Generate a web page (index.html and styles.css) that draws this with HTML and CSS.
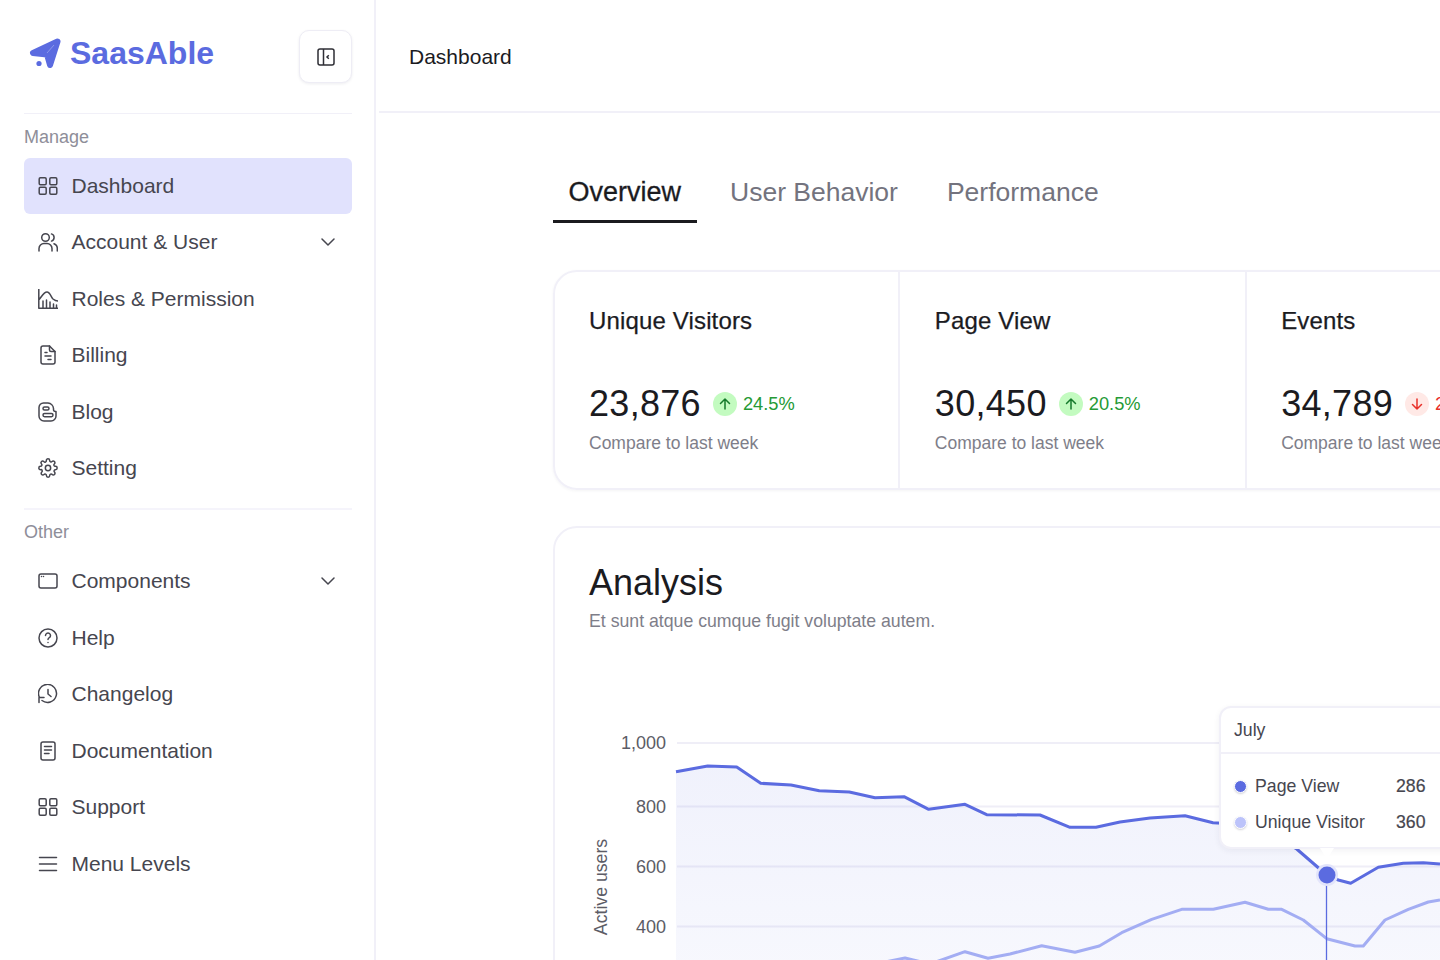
FILE: index.html
```html
<!DOCTYPE html>
<html lang="en">
<head>
    <meta charset="UTF-8" />
    <meta name="viewport" content="width=device-width, initial-scale=1.0">
    <title>SaasAble Dashboard</title>
    <link rel="stylesheet" href="styles.css">
</head>
<body>
<div class="app">
    <aside class="sidebar">
        <div class="brand-row">
            <div class="brand">
                <svg class="brand-mark" viewBox="0 0 36 36"><path class="brand-plane" d="M29.500 5.500 5 17 19 18.500 22 29z"/><path d="M26 9 19 17" stroke="#fff" stroke-opacity="0.3" fill="none"/><circle cx="11" cy="27.500" r="2.600" fill="#5b6be0"/></svg>
                <span class="brand-name">SaasAble</span>
            </div>
            <button class="collapse-btn">
                <svg viewBox="0 0 20 20" class="icon-sm"><rect x="2" y="2" width="16" height="16" rx="2"/><path d="M7.500 2v16M12.800 8.200 11 10l1.800 1.800"/></svg>
            </button>
        </div>

        <div class="nav-group first">
            <div class="nav-label">Manage</div>
            <a class="nav-item active">
                <svg viewBox="0 0 20 20" class="icon"><rect x="1.200" y="1.700" width="7" height="7" rx="1.200"/><rect x="11.800" y="1.700" width="7" height="7" rx="1.200"/><rect x="1.200" y="11.300" width="7" height="7" rx="1.200"/><rect x="11.800" y="11.300" width="7" height="7" rx="1.200"/></svg>
                <span>Dashboard</span>
            </a>
            <a class="nav-item">
                <svg viewBox="0 0 20 20" class="icon"><circle cx="7.500" cy="5.500" r="3.800"/><path d="M1 19v-2.500a5 5 0 0 1 5-5h3a5 5 0 0 1 5 5V19M13.500 1.900a3.800 3.800 0 0 1 0 7.200M16 11.800a5 5 0 0 1 3.300 4.700V19"/></svg>
                <span>Account &amp; User</span>
                <svg viewBox="0 0 14 14" class="chevron"><path d="M1 4l6 6 6-6"/></svg>
            </a>
            <a class="nav-item">
                <svg viewBox="0 0 20 20" class="icon"><path d="M.8 0v19.200H20M.8 11C3.500 8 5.500 3 9 3c3 0 4 5 6 7 1.200 1 3 2 5 2"/><path d="M5 19v-7M8.500 19v-8M12 19v-6M15.500 19v-4M18.500 19v-3"/></svg>
                <span>Roles &amp; Permission</span>
            </a>
            <a class="nav-item">
                <svg viewBox="0 0 20 20" class="icon"><path d="M11.500 1H5a2 2 0 0 0-2 2v14a2 2 0 0 0 2 2h10a2 2 0 0 0 2-2V6.500z"/><path d="M11.500 1v4a1.500 1.500 0 0 0 1.500 1.500h4M7 7.500h2M7 11h6M10 14.500h3"/></svg>
                <span>Billing</span>
            </a>
            <a class="nav-item">
                <svg viewBox="0 0 20 20" class="icon"><path d="M5.500 1h4.500a6 6 0 0 1 5.500 5.500v1a2 2 0 0 0 2 2h.5V14a5 5 0 0 1-5 5H6a5 5 0 0 1-5-5V5.500A4.500 4.500 0 0 1 5.500 1z"/><rect x="5" y="5" width="6" height="3" rx="1.500"/><rect x="5" y="11.500" width="10" height="3.200" rx="1.600"/></svg>
                <span>Blog</span>
            </a>
            <a class="nav-item">
                <svg viewBox="0 0 24 24" class="icon icon-gear"><circle cx="12" cy="12" r="3.200"/><path d="M19.400 15a1.650 1.650 0 0 0 .33 1.820l.06.06a2 2 0 1 1-2.830 2.830l-.06-.06a1.650 1.650 0 0 0-2.800 1.170V21a2 2 0 0 1-4 0v-.09a1.650 1.650 0 0 0-2.820-1.150l-.06.06a2 2 0 1 1-2.830-2.830l.06-.06A1.650 1.650 0 0 0 3.090 14H3a2 2 0 0 1 0-4h.09a1.650 1.650 0 0 0 1.150-2.820l-.06-.06a2 2 0 1 1 2.830-2.830l.06.06A1.650 1.650 0 0 0 10 3.090V3a2 2 0 0 1 4 0v.09a1.650 1.650 0 0 0 2.820 1.150l.06-.06a2 2 0 1 1 2.830 2.830l-.06.06A1.650 1.650 0 0 0 20.910 10H21a2 2 0 0 1 0 4h-.09a1.650 1.650 0 0 0-1.510 1z"/></svg>
                <span>Setting</span>
            </a>
        </div>

        <div class="nav-group">
            <div class="nav-label">Other</div>
            <a class="nav-item">
                <svg viewBox="0 0 20 20" class="icon"><rect x="1" y="3" width="18" height="14" rx="2"/><path d="M3.500 5.500h.01M5.500 5.500h.01"/></svg>
                <span>Components</span>
                <svg viewBox="0 0 14 14" class="chevron"><path d="M1 4l6 6 6-6"/></svg>
            </a>
            <a class="nav-item">
                <svg viewBox="0 0 20 20" class="icon"><circle cx="10" cy="10" r="9"/><path d="M7.500 7.500a2.500 2.500 0 1 1 3.800 2.200c-.8.500-1.300 1-1.300 1.900M10 14.500h.01"/></svg>
                <span>Help</span>
            </a>
            <a class="nav-item">
                <svg viewBox="0 0 20 20" class="icon"><path d="M1.500 13.500A9 9 0 1 1 4 16.500M1 18.500v-5h5M10 5.500V10l3 2.500"/></svg>
                <span>Changelog</span>
            </a>
            <a class="nav-item">
                <svg viewBox="0 0 20 20" class="icon"><rect x="3" y="1" width="14" height="18" rx="2"/><path d="M6.500 5.500h7M6.500 9h7M6.500 12.500h4.500"/></svg>
                <span>Documentation</span>
            </a>
            <a class="nav-item">
                <svg viewBox="0 0 20 20" class="icon"><rect x="1.200" y="1.700" width="7" height="7" rx="1.200"/><rect x="11.800" y="1.700" width="7" height="7" rx="1.200"/><rect x="1.200" y="11.300" width="7" height="7" rx="1.200"/><rect x="11.800" y="11.300" width="7" height="7" rx="1.200"/></svg>
                <span>Support</span>
            </a>
            <a class="nav-item">
                <svg viewBox="0 0 20 20" class="icon"><path d="M1.500 3.500h17M1.500 10h17M1.500 16.500h17"/></svg>
                <span>Menu Levels</span>
            </a>
        </div>
    </aside>

    <main class="main">
        <header class="topbar">Dashboard</header>
        <div class="content">
            <div class="tabs">
                <a class="tab active">Overview</a>
                <a class="tab">User Behavior</a>
                <a class="tab">Performance</a>
            </div>

            <section class="stats">
                <div class="stat">
                    <h3>Unique Visitors</h3>
                    <div class="stat-row">
                        <span class="stat-num">23,876</span>
                        <span class="badge up"><svg viewBox="0 0 14 14"><path d="M7 12V2M2.500 6.500 7 2l4.500 4.500"/></svg></span>
                        <span class="pct up">24.5%</span>
                    </div>
                    <p>Compare to last week</p>
                </div>
                <div class="stat">
                    <h3>Page View</h3>
                    <div class="stat-row">
                        <span class="stat-num">30,450</span>
                        <span class="badge up"><svg viewBox="0 0 14 14"><path d="M7 12V2M2.500 6.500 7 2l4.500 4.500"/></svg></span>
                        <span class="pct up">20.5%</span>
                    </div>
                    <p>Compare to last week</p>
                </div>
                <div class="stat">
                    <h3>Events</h3>
                    <div class="stat-row">
                        <span class="stat-num">34,789</span>
                        <span class="badge down"><svg viewBox="0 0 14 14"><path d="M7 2v10M2.500 7.500 7 12l4.500-4.500"/></svg></span>
                        <span class="pct down">20.5%</span>
                    </div>
                    <p>Compare to last week</p>
                </div>
            </section>

            <section class="analysis">
                <h2>Analysis</h2>
                <p class="analysis-sub">Et sunt atque cumque fugit voluptate autem.</p>
                <div class="chart">
                    <!-- viewBox keeps page coords, origin is the card corner -->
                    <svg class="chart-svg" width="1000" height="434" viewBox="553 527 1000 434">
                        <defs>
                            <linearGradient id="fillA" x1="0" y1="0" x2="0" y2="1">
                                <stop offset="0" stop-color="#5b6be0" stop-opacity="0.09"/>
                                <stop offset="1" stop-color="#5b6be0" stop-opacity="0.05"/>
                            </linearGradient>
                        </defs>
                        <g class="grid">
                            <path d="M677 743H1440M677 806.500H1440M677 866.500H1440M677 926.500H1440"/>
                        </g>
                        <g class="y-labels">
                            <text x="666" y="749">1,000</text>
                            <text x="666" y="813">800</text>
                            <text x="666" y="873">600</text>
                            <text x="666" y="933">400</text>
                        </g>
                        <text class="y-title" transform="translate(607 887) rotate(-90)">Active users</text>
                        <path fill="url(#fillA)" d="M676 771.700 707.700 766 736.700 767 760.700 783.300 791 785 819.300 790.700 849.300 792 875 797.700 904 796.700 928.700 809.300 965 804.300 986.700 814.700 1040 815 1070 827.300 1096 827.300 1120 822 1150 818 1185 815.700 1213 822.700 1255 825 1296.700 849 1326.700 875 1338.300 880 1350.700 883.300 1378.300 867.300 1403.300 863.300 1423.300 862.700 1440 864V961H676Z"/>
                        <path class="line-b" d="M880 963 905 958 930 964 965 951.700 988 958.300 1010 954 1041.700 945.700 1075 952.300 1099.300 946 1121.700 932.700 1151.700 919.300 1181.700 909.300 1213.300 909.300 1245 902.300 1268.300 909.300 1281.700 909.300 1303.300 920 1326.700 938.700 1355 946 1363.300 946 1385 920 1408.300 909.300 1428.300 902 1440 900"/>
                        <path class="line-a" d="M676 771.700 707.700 766 736.700 767 760.700 783.300 791 785 819.300 790.700 849.300 792 875 797.700 904 796.700 928.700 809.300 965 804.300 986.700 814.700 1040 815 1070 827.300 1096 827.300 1120 822 1150 818 1185 815.700 1213 822.700 1255 825 1296.700 849 1326.700 875 1338.300 880 1350.700 883.300 1378.300 867.300 1403.300 863.300 1423.300 862.700 1440 864"/>
                        <path class="cursor" d="M1326.500 875V961"/>
                        <circle cx="1327" cy="875" r="11" fill="#e3e5fb"/>
                        <circle cx="1327" cy="875" r="8.500" fill="#5b6be0"/>
                    </svg>
                    <div class="tip">
                        <div class="tip-head">July</div>
                        <div class="tip-body">
                            <div class="tip-row"><i class="dot dot-a"></i><span class="tip-name">Page View</span><b>286</b></div>
                            <div class="tip-row"><i class="dot dot-b"></i><span class="tip-name">Unique Visitor</span><b>360</b></div>
                        </div>
                    </div>
                </div>
            </section>
        </div>
    </main>
</div>
</body>
</html>
```

FILE: styles.css
```css
*{
    box-sizing: border-box;
}
html, body{
    margin: 0;
    height: 100%;
    overflow: hidden;
    background: #fff;
}
body{
    font-family: "Liberation Sans", Arial, sans-serif;
    color: #1b1b1f;
}
.app{
    display: flex;
    width: 1440px;
    height: 960px;
    overflow: hidden;
}

/* sidebar */
.sidebar{
    flex: 0 0 376px;
    height: 960px;
    border-right: 2px solid #f1f0f8;
    padding: 30px 22px 0 24px;
}
.brand-row{
    display: flex;
    justify-content: space-between;
    align-items: flex-start;
    height: 84px;
    border-bottom: 1px solid #f1f0f8;
}
.brand{
    display: flex;
    align-items: center;
    gap: 6px;
    padding: 5px 0 0 4px;
}
.brand-mark{
    width: 36px;
    height: 36px;
}
.brand-plane{
    fill: #5b6be0;
    stroke: #5b6be0;
    stroke-width: 6;
    stroke-linejoin: round;
}
.brand-name{
    font-size: 32px;
    font-weight: 700;
    color: #5b6be0;
}
.collapse-btn{
    width: 53px;
    height: 53px;
    background: #fff;
    border: 1px solid #eeedf5;
    border-radius: 10px;
    box-shadow: 0 1px 3px rgba(30,30,60,0.08);
    display: flex;
    align-items: center;
    justify-content: center;
    padding: 0;
}
.icon-sm{
    width: 20px;
    height: 20px;
    fill: none;
    stroke: #2e2e35;
    stroke-width: 1.5;
}
.nav-group + .nav-group{
    border-top: 2px solid #f5f4fb;
    margin-top: 11px;
}
.nav-group + .nav-group .nav-label{
    padding-top: 11px;
}
.nav-label{
    font-size: 18px;
    color: #8e8e99;
    height: 43.5px;
    padding-top: 12px;
    line-height: 22px;
}
.nav-item{
    display: flex;
    align-items: center;
    height: 56.5px;
    padding: 0 17px 0 13.5px;
    border-radius: 6px;
    font-size: 21px;
    color: #46464f;
}
.nav-item.active{
    background: #e1e2fd;
}
.nav-item span{
    flex: 1;
    margin-left: 14px;
}
.icon{
    width: 20px;
    height: 20px;
    fill: none;
    stroke: #46464f;
    stroke-width: 1.5;
    stroke-linecap: round;
    stroke-linejoin: round;
    flex: none;
}
.icon-gear{
    stroke-width: 1.8;
}
.chevron{
    width: 14px;
    height: 14px;
    fill: none;
    stroke: #46464f;
    stroke-width: 1.5;
    stroke-linecap: round;
    stroke-linejoin: round;
}

/* main */
.main{
    flex: 1;
    min-width: 0;
    padding-left: 3px;
}
.topbar{
    height: 113px;
    border-bottom: 2px solid #f1f0f8;
    padding: 44px 0 0 30px;
    font-size: 21px;
    line-height: 26px;
    color: #1b1b1f;
}
.content{
    padding: 47px 0 0 174px;
    width: 1400px;
}
.tabs{
    display: flex;
    height: 63px;
}
.tab{
    font-size: 26.5px;
    line-height: 32px;
    padding: 16px 16px 15px;
    color: #73737e;
    margin-right: 17px;
}
.tab.active{
    font-size: 27px;
    padding-left: 15.5px;
    color: #1b1b1f;
    border-bottom: 3px solid #1b1b1f;
    -webkit-text-stroke: 0.3px #1b1b1f;
}

/* stat cards */
.stats{
    display: flex;
    margin-top: 47px;
    width: 1040px;
    height: 220px;
    border: 2px solid #f1f0f8;
    border-radius: 24px;
    box-shadow: 0 1px 3px rgba(30,30,60,0.05);
}
.stat{
    width: 346.5px;
    padding: 35px 34px 0 34.5px;
    border-left: 2px solid #f1f0f8;
}
.stat:first-child{
    width: 343.5px;
    padding-left: 34px;
    border-left: 0;
}
.stat h3{
    margin: 0;
    font-size: 24px;
    line-height: 28px;
    font-weight: 400;
    letter-spacing: 0.15px;
    color: #1b1b1f;
    -webkit-text-stroke: 0.25px #1b1b1f;
}
.stat-row{
    display: flex;
    align-items: center;
    margin-top: 47px;
    height: 44px;
}
.stat-num{
    font-size: 36px;
    letter-spacing: 0.3px;
    color: #1b1b1f;
}
.badge{
    width: 24px;
    height: 24px;
    border-radius: 50%;
    margin-left: 12px;
    display: flex;
    align-items: center;
    justify-content: center;
}
.badge svg{
    width: 14px;
    height: 14px;
    fill: none;
    stroke-width: 1.5;
    stroke-linecap: round;
    stroke-linejoin: round;
}
.badge.up{
    background: #c3fbc0;
}
.badge.up svg{
    stroke: #157a2b;
}
.badge.down{
    background: #ffe9e6;
}
.badge.down svg{
    stroke: #e8302a;
}
.pct{
    font-size: 18.3px;
    margin-left: 6px;
}
.pct.up{
    color: #259a35;
}
.pct.down{
    color: #e8302a;
}
.stat p{
    margin: 5px 0 0;
    font-size: 17.5px;
    line-height: 24px;
    color: #7e7e89;
}

/* analysis card */
.analysis{
    position: relative;
    margin-top: 36px;
    width: 1040px;
    height: 520px;
    border: 2px solid #f1f0f8;
    border-radius: 24px;
    padding: 34px 34px 0;
}
.analysis h2{
    margin: 0;
    font-size: 36px;
    line-height: 42px;
    font-weight: 400;
    color: #1b1b1f;
}
.analysis-sub{
    margin: 5px 0 0;
    font-size: 17.7px;
    line-height: 24px;
    color: #7e7e89;
}
.chart-svg{
    position: absolute;
    left: -2px;
    top: -1px;
}
.grid path{
    fill: none;
    stroke: #efeef7;
    stroke-width: 2;
}
.y-labels text{
    font-size: 18px;
    fill: #5c5c66;
    text-anchor: end;
}
.y-title{
    font-size: 17.7px;
    fill: #5c5c66;
    text-anchor: middle;
}
.line-a, .line-b{
    fill: none;
    stroke-width: 3;
    stroke-linejoin: round;
}
.line-a{
    stroke: #5b6be0;
}
.line-b{
    stroke: #a3adf3;
}
.cursor{
    stroke: #5b6be0;
    stroke-width: 1.3;
    fill: none;
}

/* tooltip over the chart */
.tip{
    position: absolute;
    left: 664px;
    top: 178px;
    width: 300px;
    height: 143px;
    background: #fff;
    border: 2px solid #f1f0f8;
    border-radius: 12px;
    box-shadow: 0 2px 6px rgba(30,30,60,0.06);
}
.tip::after{
    content: "";
    position: absolute;
    left: 99px;
    bottom: -12px;
    border-left: 7px solid transparent;
    border-right: 7px solid transparent;
    border-top: 11px solid #fff;
}
.tip-head{
    height: 45.5px;
    padding: 10px 0 0 13px;
    font-size: 17.7px;
    line-height: 24px;
    color: #46464f;
    border-bottom: 2px solid #f1f0f8;
}
.tip-body{
    padding: 15.5px 0 0 13px;
}
.tip-row{
    display: flex;
    align-items: center;
    height: 35.5px;
    font-size: 17.7px;
    color: #46464f;
}
.dot{
    width: 13px;
    height: 13px;
    border-radius: 50%;
    border: 1.5px solid #fff;
    box-shadow: 0 1px 2px rgba(30,30,60,0.2);
}
.dot-a{
    background: #5b6be0;
}
.dot-b{
    background: #bcc3fa;
}
.tip-name{
    width: 141px;
    margin-left: 8px;
}
.tip-row b{
    font-weight: 400;
    -webkit-text-stroke: 0.2px #46464f;
}
```
